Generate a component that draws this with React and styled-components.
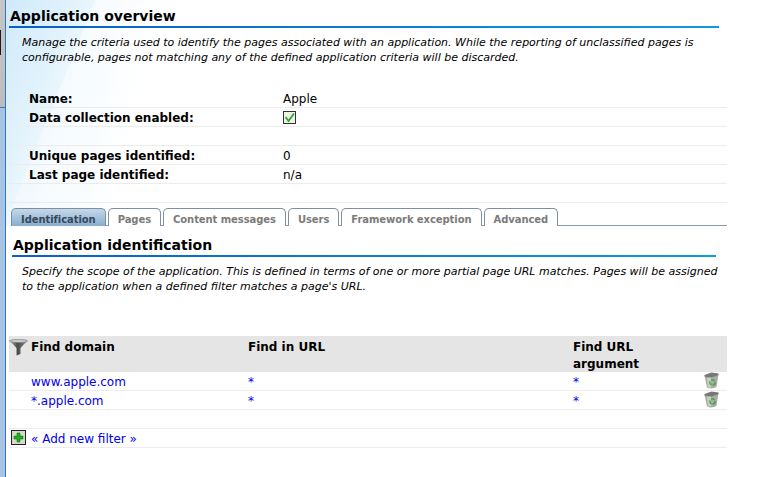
import React from "react";
import styled, { createGlobalStyle } from "styled-components";

const GlobalStyle = createGlobalStyle`
  html, body {
    margin: 0;
    padding: 0;
    background: #fff;
  }
  body {
    font-family: "DejaVu Sans", Verdana, sans-serif;
    font-size: 11px;
    color: #000;
    overflow: hidden;
  }
`;

const Shell = styled.div`
  display: flex;
  width: 783px;
  height: 477px;
  overflow: hidden;
`;

// left frame edge of the surrounding app
const SideEdge = styled.div`
  flex: none;
  width: 6px;
  box-sizing: border-box;
  border-right: 1px solid #2f78bc;
  background:
    linear-gradient(#1c1c1c, #1c1c1c) 0 30px / 1px 25px no-repeat,
    linear-gradient(to bottom, #c6c6c6 0, #bdbdbd 107px, #2f78bc 107px, #2f78bc 108px, #a9c4e2 108px, #a9c4e2 100%);
`;

const Main = styled.div`
  flex: 1;
  padding: 7px 0 0 3px;
  background:
    linear-gradient(112deg, #d0eafa 0, #e0f2fc 60px, #eaf6fd 82px, rgba(255, 255, 255, 0) 84px),
    linear-gradient(100deg, #e6f4fc 0, #f3fafe 60px, #fff 150px);
  background-size: 100% 226px;
  background-repeat: no-repeat;
`;

const Content = styled.div`
  width: 718px;
`;

const Heading = styled.h2`
  margin: ${(p) => p.$top || 0}px 0 0;
  height: 19px;
  line-height: 18px;
  padding-left: ${(p) => p.$indent || 1}px;
  font-size: 14px;
  font-weight: bold;
`;

const Rule = styled.div`
  height: 2px;
  width: ${(p) => p.$width}px;
  margin-left: ${(p) => p.$left || 0}px;
  background: linear-gradient(to right, #0a5ec6, #0d9bdf);
`;

const Desc = styled.p`
  margin: ${(p) => p.$top}px 0 0 13px;
  width: 700px;
  font-size: 11px;
  font-style: italic;
  line-height: 15px;
`;

const InfoTable = styled.div`
  margin-top: 24px;
`;

const InfoRow = styled.div`
  display: grid;
  grid-template-columns: 254px 1fr;
  height: 16px;
  padding: 2px 0 0 20px;
  line-height: 16px;
  border-bottom: 1px solid #ececec;
  font-size: 12px;
`;

const InfoLabel = styled.span`
  font-weight: bold;
`;

const CheckBox = styled.svg`
  display: block;
  margin-top: 1px;
`;

const Tabs = styled.div`
  display: flex;
  gap: 2px;
  height: 18px;
  margin: 5px 0 0 2px;
  width: 716px;
  box-shadow: inset 0 -1px 0 #8c9aa8;
`;

const Tab = styled.div`
  height: 18px;
  box-sizing: border-box;
  padding: 3px 9px 0;
  line-height: 15px;
  font-size: 10px;
  letter-spacing: -0.07px;
  font-weight: bold;
  color: ${(p) => (p.$active ? "#38475a" : "#7b7b7b")};
  background: ${(p) => (p.$active ? "linear-gradient(to bottom, #c6d8e8, #86aed0)" : "#fff")};
  border: 1px solid #7f8f9f;
  border-bottom: none;
  border-radius: 5px 5px 0 0;
`;

const columns = "22px 217px 325px 1fr 24px";

const HeadRow = styled.div`
  display: grid;
  grid-template-columns: ${columns};
  height: 33px;
  margin-top: 42px;
  background: #e5e5e5;
  font-size: 12px;
  font-weight: bold;
  line-height: 17px;
  padding-top: 3px;
`;

const BodyRow = styled.div`
  display: grid;
  grid-template-columns: ${columns};
  height: 18px;
  line-height: 20px;
  border-bottom: 1px solid #ececec;
  font-size: 12px;
  color: #0000ee;
`;

const Cell = styled.div`
  white-space: ${(p) => (p.$wrap ? "normal" : "nowrap")};
  width: ${(p) => (p.$wrap ? "110px" : "auto")};
`;

const IconCell = styled.div`
  display: flex;
  justify-content: flex-start;
  padding-top: ${(p) => p.$top || 0}px;
  padding-left: ${(p) => p.$left || 0}px;
`;

const FilterLink = styled.a`
  color: #0000ee;
  text-decoration: none;
  white-space: nowrap;
`;

const FunnelIcon = () => (
  <svg width="19" height="17" viewBox="0 0 19 17">
    <defs>
      <linearGradient id="funnel" x1="0" x2="1" y1="0" y2="0">
        <stop offset="0" stopColor="#a8a8a8" />
        <stop offset="0.45" stopColor="#4a4a4a" />
        <stop offset="1" stopColor="#8a8a8a" />
      </linearGradient>
    </defs>
    <path d="M0.5 1.5 L18.5 1.5 L11.5 9 L11.5 15 L7.5 16.5 L7.5 9 Z" fill="url(#funnel)" />
    <ellipse cx="9.5" cy="2" rx="9" ry="1.6" fill="#c8c8c8" stroke="#777" strokeWidth="0.6" />
  </svg>
);

const TrashIcon = () => (
  <svg width="15" height="17" viewBox="0 0 15 17">
    <path d="M0.5 3.5 L14.5 2 L12.5 15 Q7.5 17.5 3 15.5 Z" fill="#aaaaa6" />
    <path d="M0.5 3 L7.5 0.5 L14.5 1.5 L14.5 3 L7.5 5.5 L0.5 4.5 Z" fill="#777775" />
    <path d="M3 6 L7 5.5 L7 15.8 Q5 15.8 3.9 15 Z" fill="#cbcbc7" />
    <circle cx="8.5" cy="10.5" r="2.6" fill="none" stroke="#38a838" strokeWidth="1.4" strokeDasharray="4 1.2" />
  </svg>
);

const PlusIcon = () => (
  <svg width="15" height="15" viewBox="0 0 15 15">
    <rect x="0.5" y="0.5" width="14" height="14" fill="#d8d8c8" stroke="#222" />
    <path d="M6 3 H9 V6 H12 V9 H9 V12 H6 V9 H3 V6 H6 Z" fill="#1bb01b" stroke="#0b6b0b" strokeWidth="0.5" />
  </svg>
);

const CheckIcon = () => (
  <CheckBox width="13" height="13" viewBox="0 0 13 13">
    <rect x="0.5" y="0.5" width="12" height="12" fill="#f0f5e8" stroke="#333" />
    <path d="M2.5 6 L5.5 10 L11 2.5" fill="none" stroke="#2fa52f" strokeWidth="1.8" />
  </CheckBox>
);

const infoRows = [
  ["Name:", "Apple"],
  ["Data collection enabled:", <CheckIcon key="c" />],
  ["", ""],
  ["Unique pages identified:", "0"],
  ["Last page identified:", "n/a"],
  ["", ""],
];

const tabs = ["Identification", "Pages", "Content messages", "Users", "Framework exception", "Advanced"];

const filters = [
  ["www.apple.com", "*", "*"],
  ["*.apple.com", "*", "*"],
];

export default function App() {
  return (
    <Shell>
      <GlobalStyle />
      <SideEdge />
      <Main>
        <Content>
          <Heading>Application overview</Heading>
          <Rule $width={710} />
          <Desc $top={7}>
            Manage the criteria used to identify the pages associated with an application. While the reporting of
            unclassified pages is configurable, pages not matching any of the defined application criteria will be
            discarded.
          </Desc>
          <InfoTable>
            {infoRows.map(([label, value], i) => (
              <InfoRow key={i}>
                <InfoLabel>{label}</InfoLabel>
                <div>{value}</div>
              </InfoRow>
            ))}
          </InfoTable>
          <Tabs>
            {tabs.map((name, i) => (
              <Tab key={name} $active={i === 0}>
                {name}
              </Tab>
            ))}
          </Tabs>
          <Heading $indent={4} $top={10}>
            Application identification
          </Heading>
          <Rule $width={704} $left={3} />
          <Desc $top={7}>
            Specify the scope of the application. This is defined in terms of one or more partial page URL matches.
            Pages will be assigned to the application when a defined filter matches a page's URL.
          </Desc>
          <HeadRow>
            <IconCell>
              <FunnelIcon />
            </IconCell>
            <Cell>Find domain</Cell>
            <Cell>Find in URL</Cell>
            <Cell $wrap>Find URL argument</Cell>
            <span />
          </HeadRow>
          {filters.map((row) => (
            <BodyRow key={row[0]}>
              <span />
              <Cell>{row[0]}</Cell>
              <Cell>{row[1]}</Cell>
              <Cell>{row[2]}</Cell>
              <IconCell $left={1}>
                <TrashIcon />
              </IconCell>
            </BodyRow>
          ))}
          <BodyRow />
          <BodyRow>
            <IconCell $top={1} $left={2}>
              <PlusIcon />
            </IconCell>
            <FilterLink href="#">« Add new filter »</FilterLink>
          </BodyRow>
        </Content>
      </Main>
    </Shell>
  );
}
